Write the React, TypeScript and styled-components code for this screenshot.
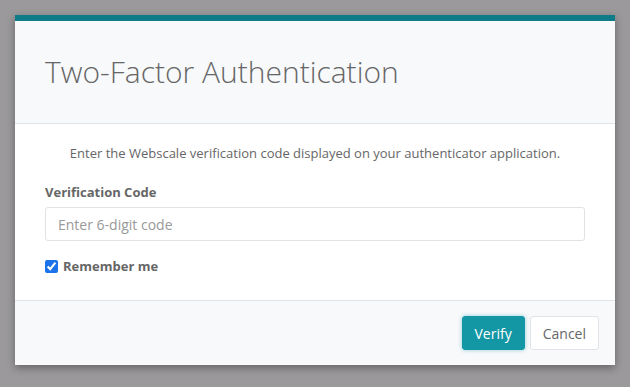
import styled, { createGlobalStyle } from "styled-components";

const GlobalStyle = createGlobalStyle`
  html, body {
    margin: 0;
    padding: 0;
    background: #9b999b;
    font-family: "Open Sans", "Liberation Sans", sans-serif;
    color: #666;
  }
`;

const Backdrop = styled.div`
  width: 630px;
  height: 387px;
  padding: 15px;
  box-sizing: border-box;
`;

const Modal = styled.div`
  width: 600px;
  background: #fff;
  border-top: 6px solid #0e7b87;
  box-shadow: 0 3px 8px rgba(0, 0, 0, 0.35);
  display: flex;
  flex-direction: column;
`;

const Header = styled.div`
  height: 102px;
  background: #f8f9fb;
  border-bottom: 1px solid #e3e4e7;
  display: flex;
  align-items: center;
  padding: 0 30px;
`;

const Title = styled.h1`
  margin: 0 0 2px;
  font-size: 30px;
  font-weight: 300;
  color: #666;
  letter-spacing: 0;
`;

const Body = styled.div`
  height: 176px;
  box-sizing: border-box;
  padding: 19px 30px 0;
  display: flex;
  flex-direction: column;
`;

const Lead = styled.p`
  margin: 0 0 19px;
  font-size: 13px;
  line-height: 20px;
  text-align: center;
  color: #666;
`;

const Label = styled.label`
  font-size: 13px;
  font-weight: 700;
  line-height: 20px;
  color: #666;
  margin-bottom: 5px;
`;

const CodeInput = styled.input`
  box-sizing: border-box;
  width: 540px;
  height: 34px;
  border: 1px solid #e1e2e5;
  border-radius: 3px;
  padding: 0 12px;
  font-family: inherit;
  font-size: 14px;
  color: #555;
  outline: none;
  &::placeholder {
    color: #999;
  }
`;

const CheckRow = styled.label`
  display: flex;
  align-items: center;
  gap: 5px;
  margin-top: 15px;
  font-size: 13px;
  font-weight: 700;
  line-height: 20px;
  color: #666;
`;

const Check = styled.input`
  margin: 0;
  width: 13px;
  height: 13px;
  accent-color: #1a73e8;
`;

const Footer = styled.div`
  height: 65px;
  box-sizing: border-box;
  background: #f8f9fb;
  border-top: 1px solid #e3e4e7;
  display: flex;
  align-items: center;
  justify-content: flex-end;
  gap: 5px;
  padding: 0 16px 0 30px;
`;

const Button = styled.button<{ $primary?: boolean }>`
  height: 34px;
  box-sizing: border-box;
  padding: 0 12px;
  border-radius: 3px;
  font-family: inherit;
  font-size: 14px;
  cursor: pointer;
  border: 1px solid ${({ $primary }) => ($primary ? "#1497a5" : "#e3e4e7")};
  background: ${({ $primary }) => ($primary ? "#1497a5" : "#fff")};
  color: ${({ $primary }) => ($primary ? "#fff" : "#666")};
  box-shadow: ${({ $primary }) => ($primary ? "0 0 4px rgba(20, 151, 165, 0.45)" : "none")};
`;

export default function App() {
  return (
    <>
      <GlobalStyle />
      <Backdrop>
        <Modal>
          <Header>
            <Title>Two-Factor Authentication</Title>
          </Header>
          <Body>
            <Lead>Enter the Webscale verification code displayed on your authenticator application.</Lead>
            <Label htmlFor="code">Verification Code</Label>
            <CodeInput id="code" placeholder="Enter 6-digit code" />
            <CheckRow>
              <Check type="checkbox" defaultChecked />
              Remember me
            </CheckRow>
          </Body>
          <Footer>
            <Button $primary>Verify</Button>
            <Button>Cancel</Button>
          </Footer>
        </Modal>
      </Backdrop>
    </>
  );
}
